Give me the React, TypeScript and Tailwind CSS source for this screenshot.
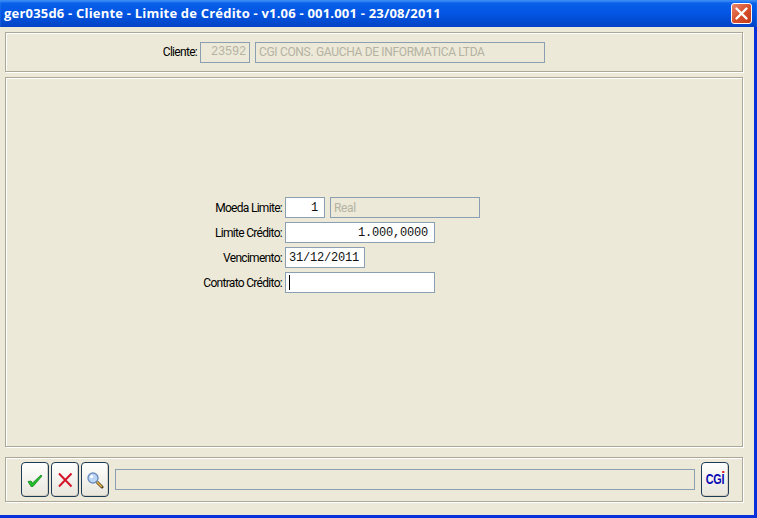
function Field({ w, children, disabled, right, sans }: { w: string; children?: React.ReactNode; disabled?: boolean; right?: boolean; sans?: boolean }) {
  return (
    <div
      className={`flex h-[21px] items-center border border-[#8b9fb3] px-[3px] ${w} ${disabled ? "text-[#b5b2a3]" : "bg-white text-[#111]"} ${right ? (disabled ? "justify-end pr-[3px]" : "justify-end pr-[6px]") : ""} ${sans ? "font-['Roboto',sans-serif] text-[12px] tracking-[-0.32px]" : "font-['Liberation_Mono',monospace] text-[12px] tracking-[-0.2px]"}`}
    >
      {children}
    </div>
  );
}

function Row({ label, children }: { label: string; children: React.ReactNode }) {
  return (
    <div className="flex items-center">
      <div className="w-[276px] text-right font-['Roboto',sans-serif] text-[12px] tracking-[-0.7px] text-black">{label}</div>
      <div className="ml-[3px] flex gap-[5px]">{children}</div>
    </div>
  );
}

function ToolButton({ children }: { children: React.ReactNode }) {
  return (
    <button className="flex h-[35px] w-[28px] items-center justify-center rounded-[4px] border border-[#1f3a55] bg-gradient-to-b from-white to-[#e8e6dc] shadow-[inset_-1px_-1px_0_#d6d0c4]">
      {children}
    </button>
  );
}

export default function App() {
  return (
    <div className="flex h-[518px] w-[757px] flex-col overflow-hidden bg-[#ece9d8] font-['Roboto',sans-serif]">
      {/* title bar */}
      <div className="flex h-[27px] shrink-0 items-center justify-between bg-gradient-to-b from-[#0a62ea] via-[#0355e3] to-[#0344c4] pr-[5px] pl-[4px] shadow-[inset_0_2px_2px_#3a8cf5]">
        <span className="font-['Open_Sans',sans-serif] text-[13px] font-bold whitespace-nowrap text-white tracking-[0.2px]">
          ger035d6 - Cliente - Limite de Crédito - v1.06 - 001.001 - 23/08/2011
        </span>
        <div className="mb-px flex h-[21px] w-[21px] items-center justify-center rounded-[3px] border border-white bg-gradient-to-br from-[#e8866a] via-[#d8502c] to-[#c23a17]">
          <svg width="15" height="15" viewBox="0 0 15 15">
            <path d="M2.5 2.5 L12.5 12.5 M12.5 2.5 L2.5 12.5" stroke="#fff" strokeWidth="2.4" strokeLinecap="round" />
          </svg>
        </div>
      </div>

      <div className="flex flex-1 flex-col border-r-[3px] border-b-[3px] border-[#0831d9] pt-[5px] pr-[11px] pl-[5px]">
        {/* client header */}
        <div className="flex h-[40px] items-center border border-[#aca899] shadow-[inset_1px_1px_0_#fff,1px_1px_0_#fff]">
          <div className="w-[191px] text-right text-[12px] tracking-[-0.7px] text-black">Cliente:</div>
          <div className="ml-[3px] flex gap-[5px]">
            <Field w="w-[50px]" disabled right>23592</Field>
            <Field w="w-[290px]" disabled sans>CGI CONS. GAUCHA DE INFORMATICA LTDA</Field>
          </div>
        </div>

        {/* form */}
        <div className="mt-[5px] flex h-[370px] flex-col gap-[4px] border border-[#aca899] pt-[119px] shadow-[inset_1px_1px_0_#fff,1px_1px_0_#fff]">
          <Row label="Moeda Limite:">
            <Field w="w-[40px]" right>1</Field>
            <Field w="w-[150px]" disabled sans>Real</Field>
          </Row>
          <Row label="Limite Crédito:">
            <Field w="w-[150px]" right>1.000,0000</Field>
          </Row>
          <Row label="Vencimento:">
            <Field w="w-[80px]">31/12/2011</Field>
          </Row>
          <Row label="Contrato Crédito:">
            <Field w="w-[150px]">
              <span className="h-[15px] w-px bg-black" />
            </Field>
          </Row>
        </div>

        {/* toolbar */}
        <div className="mt-[10px] flex h-[45px] items-center border border-[#aca899] pl-[15px] shadow-[inset_1px_1px_0_#fff,1px_1px_0_#fff]">
          <div className="flex gap-[2px]">
            <ToolButton>
              <svg width="18" height="18" viewBox="0 0 18 18">
                <path d="M2 10.5 L5 10 L6.5 12 L15 4 L16 5 L7 15.5 L5 15.5 Z" fill="#22c02c" stroke="#0b7a18" strokeWidth="0.7" />
              </svg>
            </ToolButton>
            <ToolButton>
              <svg width="18" height="18" viewBox="0 0 18 18">
                <path d="M3 2.5 L15.5 15.5 M15.5 2.5 L3 15.5" stroke="#d4162a" strokeWidth="2" />
              </svg>
            </ToolButton>
            <ToolButton>
              <svg width="18" height="18" viewBox="0 0 18 18">
                <path d="M10.5 10.5 L16 16" stroke="#4a3c18" strokeWidth="3" strokeLinecap="round" />
                <path d="M10.8 10.8 L15.5 15.5" stroke="#eab64a" strokeWidth="1.6" strokeLinecap="round" />
                <circle cx="7" cy="7" r="5" fill="#bcd6f5" stroke="#6c8fc0" strokeWidth="1.4" />
                <circle cx="5.6" cy="5.6" r="1.6" fill="#fff" />
              </svg>
            </ToolButton>
          </div>
          <div className="ml-[6px] h-[21px] w-[580px] border border-[#8b9fb3]" />
          <div className="ml-[6px]">
            <ToolButton>
              <span className="relative inline-block scale-x-[0.72] font-['Liberation_Sans',sans-serif] text-[15px] font-bold tracking-[-0.2px] text-[#0a0ab4]">
                CGI
                <span className="absolute top-[3px] right-0 h-[2px] w-[3px] bg-[#e02020]" />
              </span>
            </ToolButton>
          </div>
        </div>
      </div>
    </div>
  );
}
